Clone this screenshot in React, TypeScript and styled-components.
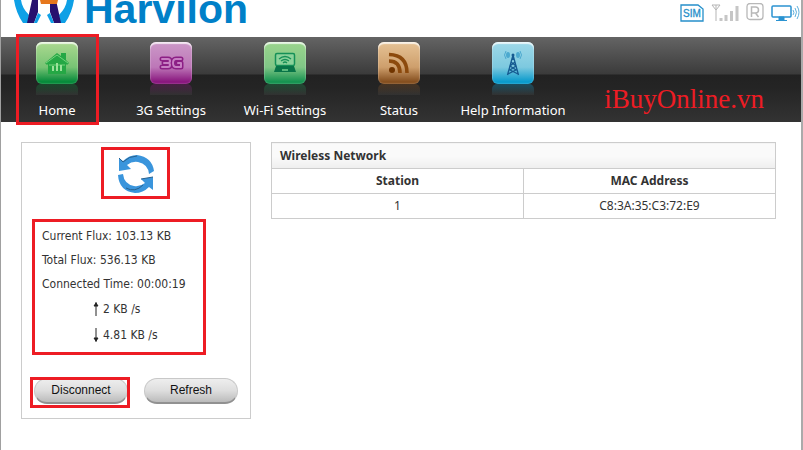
import React from "react";
import styled, { createGlobalStyle, css } from "styled-components";

const RED = "#ed1c24";
const LINE = "#cccccc";
const UI_FONT = '"DejaVu Sans Condensed", "DejaVu Sans", sans-serif';
const TEXT_FONT = '"Noto Sans", sans-serif';

const GlobalStyle = createGlobalStyle`
  * { box-sizing: border-box; }
  body {
    margin: 0;
    background: #fff;
    color: #333;
    font: 12px/24px ${TEXT_FONT};
    overflow: hidden;
  }
`;

const Page = styled.div`
  min-height: 100vh;
  border-left: 1px solid #a0a0a0;
  border-right: 2px solid #aaa;
`;

const Header = styled.header`
  display: flex;
  justify-content: space-between;
  height: 37px;
  padding-left: 12px;
  overflow: hidden;
`;

const Brand = styled.a`
  display: flex;
  gap: 7px;
  height: 23px;
  align-items: flex-end;
  color: #0080c8;
  font: bold 41px/41px "Liberation Sans", Arial, sans-serif;
  text-decoration: none;
`;

const BrandName = styled.span`
  line-height: 41px;
  margin-bottom: -7px;
`;

const StatusIcons = styled.div`
  display: flex;
  gap: 7px;
  padding: 3px 1px 0 0;
`;

const Nav = styled.nav`
  display: flex;
  justify-content: space-between;
  height: 85px;
  background: linear-gradient(#646464 0, #3b3b3b 37px, #222 38px, #242424 50px, #333 100%);
`;

const NavList = styled.ul`
  display: flex;
  margin: 0 0 0 -1px;
  padding: 0;
  list-style: none;
`;

const highlight = css`
  &::after {
    content: "";
    position: absolute;
    border: 3px solid ${RED};
    pointer-events: none;
  }
`;

const NavItem = styled.li<{ $marked?: boolean }>`
  position: relative;
  width: 114px;
  ${(p) => p.$marked && highlight}
  &::after {
    inset: -3px 15px -3px 16px;
  }
`;

const NavLink = styled.a`
  display: flex;
  flex-direction: column;
  align-items: center;
  padding-top: 5px;
  color: #fff;
  font: 13px/20px ${TEXT_FONT};
  text-decoration: none;
  white-space: nowrap;
`;

const Tile = styled.span<{ $top: string; $mid: string; $low: string }>`
  display: flex;
  align-items: center;
  justify-content: center;
  width: 42px;
  height: 42px;
  border-radius: 6px;
  background: linear-gradient(${(p) => `${p.$top}, ${p.$mid} 60%, ${p.$low} 94%`});
  box-shadow: inset 0 2px 1px rgba(255, 255, 255, 0.75), inset 0 0 1px 1px rgba(255, 255, 255, 0.12);
`;

const Reflection = styled.span<{ $color: string }>`
  width: 42px;
  height: 11px;
  margin-bottom: 5px;
  border-radius: 5px 5px 0 0;
  background: ${(p) => `linear-gradient(${p.$color}, #444)`};
  opacity: 0.35;
`;

const Watermark = styled.span`
  padding: 46px 37px 0 0;
  color: ${RED};
  font: 27px/32px "Liberation Serif", "Times New Roman", serif;
`;

const Main = styled.main`
  display: flex;
  align-items: flex-start;
  gap: 20px;
  padding: 20px 25px 20px 20px;
`;

const Panel = styled.aside`
  flex: 0 0 230px;
  padding: 4px 10px 10px;
  border: 1px solid ${LINE};
`;

const SyncBox = styled.div`
  display: flex;
  align-items: center;
  justify-content: center;
  width: 69px;
  height: 52px;
  margin: 0 auto 20px 69px;
  padding-top: 2px;
  border: 3px solid ${RED};
`;

const Stats = styled.div`
  width: 174px;
  height: 136px;
  padding: 2px 7px;
  border: 3px solid ${RED};
  font: 12px/24px ${UI_FONT};
`;

const Rate = styled.div`
  display: flex;
  align-items: center;
  gap: 4px;
  height: 26px;
  padding-left: 51px;
`;

const Actions = styled.div`
  display: flex;
  gap: 16px;
  padding: 23px 0 4px 2px;
`;

const ActionSlot = styled.div<{ $marked?: boolean }>`
  position: relative;
  ${(p) => p.$marked && highlight}
  &::after {
    inset: -1px -2px -4px -4px;
  }
`;

const PillButton = styled.button`
  display: block;
  width: 94px;
  height: 26px;
  padding: 0 0 2px;
  border: 1px solid #c8c8c8;
  border-bottom: 2px solid #919191;
  border-radius: 13px;
  background: linear-gradient(#eee, #dedede 50%, #bbb);
  color: #111;
  font: 12px/20px "Liberation Sans", Arial, sans-serif;
`;

const Table = styled.table`
  flex: 1;
  width: 100%;
  border-collapse: collapse;
  table-layout: fixed;
  font: 12px/24px ${TEXT_FONT};
`;

const Cell = styled.td`
  height: 25px;
  padding: 0;
  border: 1px solid ${LINE};
  text-align: center;
`;

const TitleCell = styled(Cell)`
  height: 26px;
  padding: 0 8px;
  background: linear-gradient(#fafafa 50%, #eee);
  text-align: left;
`;

const HomeIcon = () => (
  <svg width="26" height="24" viewBox="0 0 26 24">
    <path d="M1 12 13 2l4 3V2h5v7l3 3-2 2-1-1v10H4V13l-1 1z" fill="#25a845" />
    <path d="m2 12 11-8 11 8M5 14h16" fill="none" stroke="#74d57c" strokeWidth="1" />
    <path d="M9 20v-5M13 20v-8M17 20v-6" stroke="#9ce29b" strokeWidth="2" />
  </svg>
);

const ThreeGIcon = () => (
  <svg width="26" height="16" viewBox="0 0 26 16">
    <g fill="none" strokeLinejoin="round" strokeLinecap="round">
      <path d="M4 4h6q2 0 2 2t-2 2H6h4q2 0 2 2t-2 2H4M23 4h-5q-3 0-3 4t3 4h5V8h-3" stroke="#8c1f85" strokeWidth="5" />
      <path d="M4 4h6q2 0 2 2t-2 2H6h4q2 0 2 2t-2 2H4M23 4h-5q-3 0-3 4t3 4h5V8h-3" stroke="#c77fc3" strokeWidth="2" />
    </g>
  </svg>
);

const LaptopIcon = () => (
  <svg width="24" height="22" viewBox="0 0 24 22">
    <rect x="2.500" y="1.500" width="19" height="12" rx="1.500" fill="#8bd29a" stroke="#159057" strokeWidth="1.500" />
    <path d="M6 7q6-5 12 0M8 9q4-3 8 0M10 11q2-2 4 0" fill="none" stroke="#159057" strokeWidth="1.300" />
    <path d="M3 14h18l2 6H1z" fill="#087448" />
    <path d="M9 18h6" stroke="#76cf8d" strokeWidth="1.500" />
  </svg>
);

const FeedIcon = () => (
  <svg width="22" height="22" viewBox="0 0 22 22">
    <circle cx="4" cy="18" r="3" fill="#713500" />
    <path d="M1 9q11 0 11 12M1 2.500Q19 3 19 21" fill="none" stroke="#8c4a0d" strokeWidth="3.600" />
  </svg>
);

const TowerIcon = () => (
  <svg width="20" height="28" viewBox="0 0 20 28">
    <path d="M10 6 4.500 26M10 6l5.500 20M10 6v5M8 13l5 4-6 4 8 4M12 13l-5 4 6 4-8 4" fill="none" stroke="#155a91" strokeWidth="1.300" />
    <circle cx="10" cy="6" r="1.500" fill="#155a91" />
    <ellipse cx="5" cy="6" rx="2" ry="3" fill="#4ca9cf" />
    <ellipse cx="15" cy="6" rx="2" ry="3" fill="#4ca9cf" />
    <path d="M3 2q-3 4 0 8M17 2q3 4 0 8" fill="none" stroke="#4ca9cf" />
  </svg>
);

const LogoMark = () => (
  <svg width="64" height="23" viewBox="0 0 64 23">
    <path d="M1 0h7q1 8 8 15l-1 8H10Q3 13 1 0zM61 0h-7q-1 8-8 15l1 8h5Q59 13 61 0z" fill="#0ea0e6" />
    <path d="M19 0h6v12l-4 11h-7zM43 0h-6v12l4 11h7z" fill="#27116f" />
    <path d="M25 13l3 2-4 8h-3zM37 13l-3 2 4 8h3z" fill="#0ea0e6" />
    <path d="M29 0h14v1H29zM27 0h18l-1 4H28z" fill="#e6771d" />
  </svg>
);

const SimIcon = () => (
  <svg width="24" height="19" viewBox="0 0 24 19">
    <path d="M1 2h17l5 4v12H1z" fill="#fff" stroke="#268fca" strokeWidth="1.300" />
    <text x="3" y="14" fill="#268fca" stroke="#268fca" strokeWidth="0.300" fontFamily="Liberation Sans, sans-serif" fontSize="10">SIM</text>
  </svg>
);

const SignalIcon = () => (
  <svg width="28" height="19" viewBox="0 0 28 19">
    <path d="M1 2h8M1 2l4 5 4-5M5 2v16" fill="none" stroke="#b5b5b5" strokeWidth="1" />
    <path d="M10 18v-3M15 18v-6M20.500 18V8M26 18V3" stroke="#c6c6c6" strokeWidth="3" />
  </svg>
);

const RoamingIcon = () => (
  <svg width="18" height="18" viewBox="0 0 18 18">
    <rect x="1" y="0.500" width="16" height="16" rx="3" fill="#fff" stroke="#b8b8b8" strokeWidth="1.300" />
    <path d="M5.500 14V4h4q3 0 3 3t-3 3h-4M9.500 10l3 4" fill="none" stroke="#b8b8b8" strokeWidth="1.500" />
  </svg>
);

const MonitorIcon = () => (
  <svg width="29" height="20" viewBox="0 0 29 20">
    <rect x="1" y="3" width="19" height="11" rx="1" fill="#fff" stroke="#2b93d1" strokeWidth="1.500" />
    <path d="M8 14h5v3H8zM5 17.500h11" fill="#2b93d1" stroke="#2b93d1" strokeWidth="1" />
    <path d="M22 7q2 3 0 5M24 5q3 4 0 9M26 3q4 6 0 13" fill="none" stroke="#5fb0dc" />
  </svg>
);

const SyncIcon = () => (
  <svg width="40" height="38" viewBox="0 0 40 38">
    <g fill="#3a95dc">
      <path d="M3 3v13l12-2-4-4q5-4 11-3 10 2 11 12l5-3Q36 2 21 0 13 0 7 6z" />
      <path d="M37 35V22l-12 2 4 4q-5 4-11 3Q8 29 7 19l-5 1q1 16 17 18 8 0 14-6z" />
    </g>
    <path d="m3 3 4 4Q13 1 21 1M25 24l12-2M10 33q9 5 17-3" fill="none" stroke="#28618e" strokeWidth="1" />
  </svg>
);

const RateArrow = ({ down }: { down?: boolean }) => (
  <svg width="6" height="16" viewBox="0 0 6 16">
    <path d={down ? "M3 1v14M1 11h4l-2 3z" : "M3 15V1M1 5h4L3 2z"} fill="#222" stroke="#222" strokeWidth="1" />
  </svg>
);

const items = [
  { label: "Home", icon: <HomeIcon />, top: "#acd990", mid: "#77c374", low: "#078b3b", marked: true },
  { label: "3G Settings", icon: <ThreeGIcon />, top: "#cc99c8", mid: "#bd77b8", low: "#8a187f" },
  { label: "Wi-Fi Settings", icon: <LaptopIcon />, top: "#9bd58d", mid: "#80c686", low: "#179351" },
  { label: "Status", icon: <FeedIcon />, top: "#e6c396", mid: "#ce9f6c", low: "#865020" },
  { label: "Help Information", icon: <TowerIcon />, top: "#9fd9e9", mid: "#7dc9df", low: "#0b9bcc" },
];

export default function App() {
  return (
    <>
      <GlobalStyle />
      <Page>
        <Header>
          <Brand href="#">
            <LogoMark />
            <BrandName>Harvilon</BrandName>
          </Brand>
          <StatusIcons>
            <SimIcon />
            <SignalIcon />
            <RoamingIcon />
            <MonitorIcon />
          </StatusIcons>
        </Header>
        <Nav>
          <NavList>
            {items.map((i) => (
              <NavItem key={i.label} $marked={i.marked}>
                <NavLink href="#">
                  <Tile $top={i.top} $mid={i.mid} $low={i.low}>{i.icon}</Tile>
                  <Reflection $color={i.low} />
                  {i.label}
                </NavLink>
              </NavItem>
            ))}
          </NavList>
          <Watermark>iBuyOnline.vn</Watermark>
        </Nav>
        <Main>
          <Panel>
            <SyncBox><SyncIcon /></SyncBox>
            <Stats>
              <div>Current Flux: 103.13 KB</div>
              <div>Total Flux: 536.13 KB</div>
              <div>Connected Time: 00:00:19</div>
              <Rate><RateArrow />2 KB /s</Rate>
              <Rate><RateArrow down />4.81 KB /s</Rate>
            </Stats>
            <Actions>
              <ActionSlot $marked><PillButton type="button">Disconnect</PillButton></ActionSlot>
              <ActionSlot><PillButton type="button">Refresh</PillButton></ActionSlot>
            </Actions>
          </Panel>
          <Table>
            <thead>
              <tr><TitleCell as="th" colSpan={2}>Wireless Network</TitleCell></tr>
              <tr><Cell as="th">Station</Cell><Cell as="th">MAC Address</Cell></tr>
            </thead>
            <tbody>
              <tr><Cell>1</Cell><Cell>C8:3A:35:C3:72:E9</Cell></tr>
            </tbody>
          </Table>
        </Main>
      </Page>
    </>
  );
}
